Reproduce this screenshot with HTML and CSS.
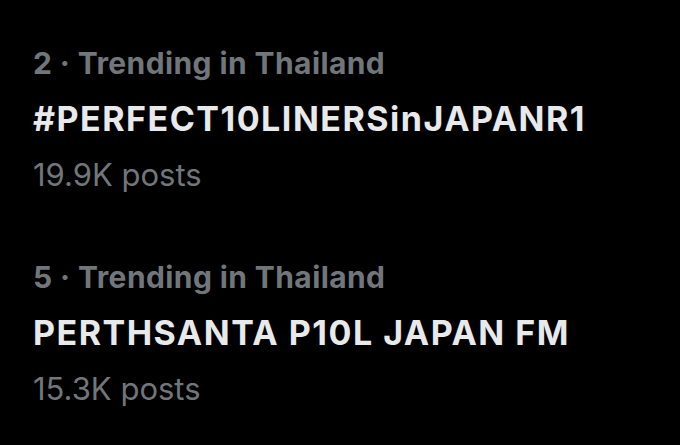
FILE: index.html
```html
<html>
    <head>
        <title>Trends</title>
        <link rel="stylesheet" href="styles.css">
    </head>
    <body>
        <div class="trends">
            <div class="trend">
                <div class="meta">2 · Trending in Thailand</div>
                <div class="name">#PERFECT10LINERSinJAPANR1</div>
                <div class="count">19.9K posts</div>
            </div>
            <div class="trend">
                <div class="meta">5 · Trending in Thailand</div>
                <div class="name">PERTHSANTA P10L JAPAN FM</div>
                <div class="count">15.3K posts</div>
            </div>
        </div>
    </body>
</html>
```
FILE: styles.css
```css
body
{
    margin: 0;
    background-color: #000;
    font-family: Inter, "Liberation Sans", sans-serif;
}
.trends
{
    display: flex;
    flex-direction: column;
    gap: 46px;
    padding: 35px 0 0 33px;
}
.trend
{
    display: flex;
    flex-direction: column;
}
.meta
{
    color: #71767b;
    font-size: 30px;
    font-weight: 700;
    letter-spacing: 0.4px;
    line-height: 56px;
}
.name
{
    color: #e7e9ea;
    font-size: 34px;
    font-weight: 700;
    letter-spacing: 1.5px;
    line-height: 56px;
}
.count
{
    color: #71767b;
    font-size: 31px;
    font-weight: 400;
    line-height: 56px;
}
```
